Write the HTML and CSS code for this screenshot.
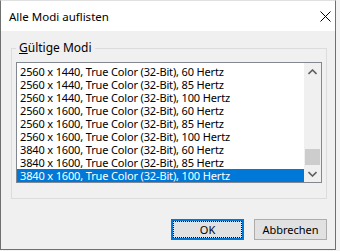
FILE: index.html
```html
<!DOCTYPE html>
<html lang="de">
<head>
  <meta charset="UTF-8">
  <title>Alle Modi auflisten</title>
  <link rel="stylesheet" href="styles.css">
</head>
<body>
  <div class="window">
    <div class="titlebar">
      <span class="title">Alle Modi auflisten</span>
      <svg class="close" width="11" height="11" viewBox="0 0 11 11">
        <path d="M0.5 0.5 L10.5 10.5 M10.5 0.5 L0.5 10.5" stroke="#000" stroke-width="1" fill="none"/>
      </svg>
    </div>

    <div class="content">
      <fieldset class="group">
        <legend><u>G</u>ültige Modi</legend>
        <div class="listbox">
          <div class="list">
            <div class="row">2560 x 1440, True Color (32-Bit), 60 Hertz</div>
            <div class="row">2560 x 1440, True Color (32-Bit), 85 Hertz</div>
            <div class="row">2560 x 1440, True Color (32-Bit), 100 Hertz</div>
            <div class="row">2560 x 1600, True Color (32-Bit), 60 Hertz</div>
            <div class="row">2560 x 1600, True Color (32-Bit), 85 Hertz</div>
            <div class="row">2560 x 1600, True Color (32-Bit), 100 Hertz</div>
            <div class="row">3840 x 1600, True Color (32-Bit), 60 Hertz</div>
            <div class="row">3840 x 1600, True Color (32-Bit), 85 Hertz</div>
            <div class="row selected">3840 x 1600, True Color (32-Bit), 100 Hertz</div>
          </div>
          <div class="scrollbar">
            <div class="arrow">
              <svg width="9" height="6" viewBox="0 0 9 6">
                <path d="M0.5 5 L4.5 1 L8.5 5" stroke="#606060" stroke-width="1.6" fill="none"/>
              </svg>
            </div>
            <div class="track">
              <div class="thumb"></div>
            </div>
            <div class="arrow">
              <svg width="9" height="6" viewBox="0 0 9 6">
                <path d="M0.5 1 L4.5 5 L8.5 1" stroke="#606060" stroke-width="1.6" fill="none"/>
              </svg>
            </div>
          </div>
        </div>
      </fieldset>

      <div class="buttons">
        <button class="btn default">OK</button>
        <button class="btn">Abbrechen</button>
      </div>
    </div>
  </div>
</body>
</html>
```

FILE: styles.css
```css
body {
  margin: 0;
  background: #f3f3f3;
  font-family: "Noto Sans", sans-serif;
  font-size: 11px;
  color: #000;
}

.window {
  width: 336px;
  height: 250px;
  box-sizing: border-box;
  border: 1px solid #707070;
  border-top-color: #e0e0e0;
  background: #f0f0f0;
}

.titlebar {
  height: 30px;
  background: #fff;
  display: flex;
  align-items: center;
  justify-content: space-between;
  padding: 0 4px 0 8px;
}

.title {
  font-size: 11.5px;
}

.close {
  display: block;
}

.content {
  padding: 0 8px 0 10px;
}

.group {
  margin: 9px 0 0;
  padding: 0 4px 15px;
  border: 1px solid #dcdcdc;
}

legend {
  padding: 0 3px;
  font-size: 12px;
  line-height: 16px;
}

.listbox {
  margin-top: 6px;
  display: flex;
  height: 121px;
  box-sizing: border-box;
  border: 1px solid #828790;
  background: #fff;
}

.list {
  flex: 1;
  padding-top: 2px;
  overflow: hidden;
}

.row {
  height: 13px;
  line-height: 13px;
  padding-left: 3px;
  letter-spacing: -0.15px;
  white-space: nowrap;
}

.row.selected {
  background: #0078d7;
  color: #fff;
}

.scrollbar {
  width: 17px;
  display: flex;
  flex-direction: column;
  background: #f0f0f0;
}

.arrow {
  height: 17px;
  display: flex;
  align-items: center;
  justify-content: center;
}

.track {
  flex: 1;
  display: flex;
  flex-direction: column;
  justify-content: flex-end;
}

.thumb {
  height: 16px;
  margin: 0 1px;
  background: #cdcdcd;
}

.buttons {
  display: flex;
  justify-content: flex-end;
  gap: 10px;
  margin-top: 20px;
}

.btn {
  width: 73px;
  height: 21px;
  padding: 0;
  font-family: "Noto Sans", sans-serif;
  font-size: 11px;
  color: #000;
  background: #e1e1e1;
  border: 1px solid #adadad;
}

.btn.default {
  border: 2px solid #0078d7;
  outline: 1px dotted #000;
  outline-offset: -3px;
}
```
